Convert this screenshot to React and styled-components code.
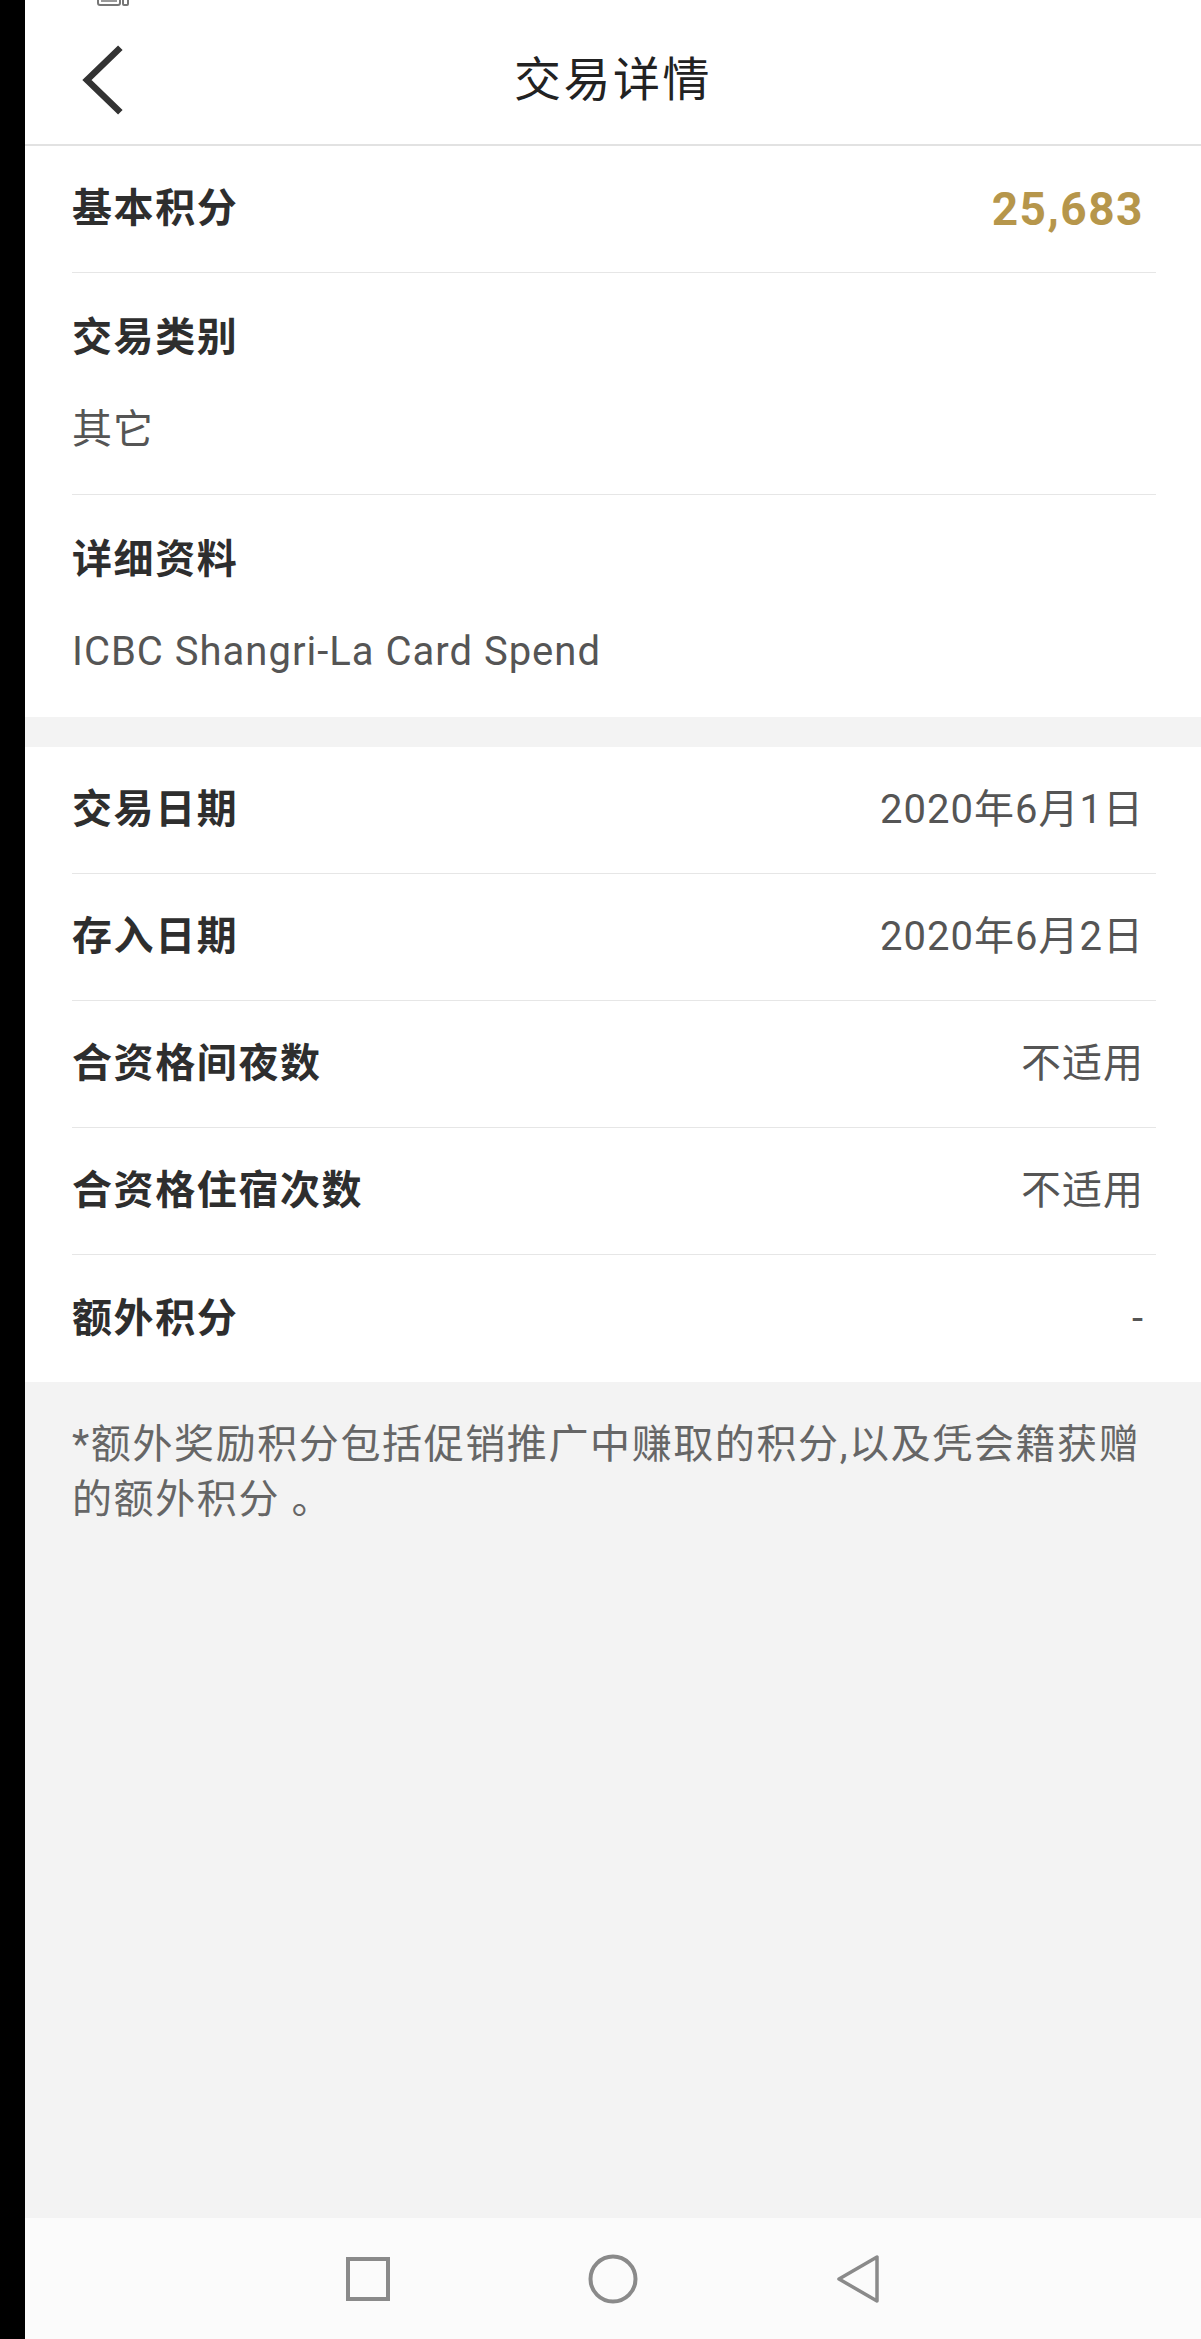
import React from 'react';
import styled, { createGlobalStyle } from 'styled-components';

const GlobalStyle = createGlobalStyle`
  html, body {
    margin: 0;
    padding: 0;
    background: #000;
  }
  body {
    font-family: Roboto, 'Noto Sans CJK SC', sans-serif;
  }
`;

const summary = [
  { label: '交易日期', value: '2020年6月1日' },
  { label: '存入日期', value: '2020年6月2日' },
  { label: '合资格间夜数', value: '不适用' },
  { label: '合资格住宿次数', value: '不适用' },
  { label: '额外积分', value: '-' },
];

const App = () => {
  return (
    <Screen>
      <GlobalStyle />
      <Bezel />
      <Phone>
        <Header>
          <StatusIcon width="34" height="6" viewBox="0 0 34 6">
            <rect x="1" y="-4" width="22" height="9" rx="2" fill="none" stroke="#777" strokeWidth="2" />
            <rect x="4" y="-4" width="16" height="6" fill="#999" />
            <rect x="26" y="-4" width="5" height="9" rx="1" fill="none" stroke="#777" strokeWidth="2" />
          </StatusIcon>
          <BackButton aria-label="返回">
            <svg width="48" height="72" viewBox="0 0 48 72">
              <path d="M40 6 L9 36 L40 66" fill="none" stroke="#333" strokeWidth="6.5" strokeLinecap="square" />
            </svg>
          </BackButton>
          <Title>交易详情</Title>
          <span />
        </Header>

        <Section>
          <InlineRow>
            <Label>基本积分</Label>
            <Points>25,683</Points>
          </InlineRow>
          <StackRow>
            <Label>交易类别</Label>
            <Value>其它</Value>
          </StackRow>
          <StackRow>
            <Label>详细资料</Label>
            <Value>ICBC Shangri-La Card Spend</Value>
          </StackRow>
        </Section>

        <Section $gap>
          {summary.map((item) => (
            <InlineRow key={item.label}>
              <Label>{item.label}</Label>
              <Value>{item.value}</Value>
            </InlineRow>
          ))}
        </Section>

        <Note>*额外奖励积分包括促销推广中赚取的积分,以及凭会籍获赠的额外积分 。</Note>

        <NavBar>
          <svg width="46" height="46" viewBox="0 0 46 46">
            <rect x="3" y="3" width="40" height="40" fill="none" stroke="#8a8a8a" strokeWidth="4" />
          </svg>
          <svg width="50" height="50" viewBox="0 0 50 50">
            <circle cx="25" cy="25" r="22.5" fill="none" stroke="#8a8a8a" strokeWidth="4" />
          </svg>
          <svg width="46" height="50" viewBox="0 0 46 50">
            <path d="M42 3 L42 47 L4 25 Z" fill="none" stroke="#8a8a8a" strokeWidth="3.5" strokeLinejoin="round" />
          </svg>
        </NavBar>
      </Phone>
    </Screen>
  );
};

const Screen = styled.div`
  display: flex;
  width: 1201px;
  height: 2339px;
  overflow: hidden;
`;

const Bezel = styled.div`
  width: 25px;
  flex-shrink: 0;
  background: #000;
`;

const Phone = styled.div`
  flex: 1;
  display: flex;
  flex-direction: column;
  background: #f3f3f3;
`;

const Header = styled.header`
  position: relative;
  display: grid;
  grid-template-columns: 1fr auto 1fr;
  align-items: center;
  box-sizing: border-box;
  height: 146px;
  padding-top: 16px;
  background: #fff;
  border-bottom: 2px solid #e2e2e2;
`;

const StatusIcon = styled.svg`
  position: absolute;
  top: 0;
  left: 72px;
`;

const BackButton = styled.button`
  justify-self: start;
  display: flex;
  align-items: center;
  margin-left: 53px;
  padding: 0;
  border: none;
  background: none;
`;

const Title = styled.h1`
  margin: 0;
  font-size: 47px;
  font-weight: 400;
  letter-spacing: 2.5px;
  line-height: 60px;
  color: #222;
`;

const Section = styled.section`
  background: #fff;
  margin-top: ${(p) => (p.$gap ? '30px' : '0')};
`;

const InlineRow = styled.div`
  display: flex;
  align-items: center;
  justify-content: space-between;
  box-sizing: border-box;
  height: 127px;
  margin: 0 45px 0 47px;
  padding-right: 12px;
  border-bottom: 1px solid #e6e6e6;

  &:last-child {
    border-bottom: none;
  }
`;

const StackRow = styled.div`
  display: flex;
  flex-direction: column;
  gap: 36px;
  margin: 0 45px 0 47px;
  padding: 37px 12px 36px 0;
  border-bottom: 1px solid #e6e6e6;

  &:last-child {
    border-bottom: none;
    padding-bottom: 37px;
  }
`;

const Label = styled.div`
  font-size: 40px;
  font-weight: 700;
  letter-spacing: 1.6px;
  line-height: 56px;
  color: #2e2e2e;
`;

const Value = styled.div`
  font-size: 40px;
  font-weight: 400;
  letter-spacing: 1px;
  line-height: 56px;
  color: #555;
`;

const Points = styled.div`
  font-size: 46px;
  font-weight: 700;
  letter-spacing: 1.5px;
  line-height: 56px;
  color: #b6964b;
`;

const Note = styled.p`
  flex: 1;
  margin: 0;
  padding: 35px 34px 0 47px;
  font-size: 40px;
  letter-spacing: 1.6px;
  line-height: 55px;
  color: #666;
`;

const NavBar = styled.nav`
  display: flex;
  align-items: center;
  justify-content: center;
  gap: 197px;
  height: 121px;
  flex-shrink: 0;
  background: #fbfbfb;
`;

export default App;
